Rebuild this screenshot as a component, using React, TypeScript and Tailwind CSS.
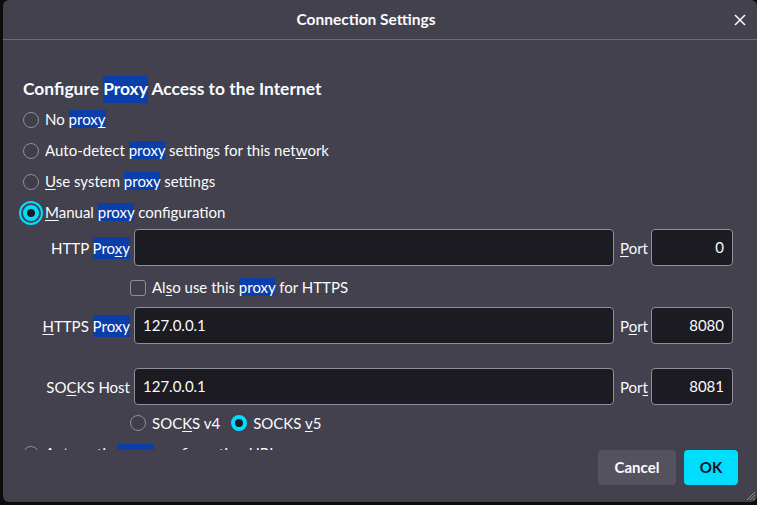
import React from "react";

const font = { fontFamily: "Lato, 'Noto Sans', sans-serif" };

function Hl({ children }: { children: React.ReactNode }) {
  return <span className="bg-[#0a3ea8] text-white">{children}</span>;
}

function Radio({ checked, focused }: { checked?: boolean; focused?: boolean }) {
  if (checked) {
    return (
      <span
        className={
          "inline-block h-4 w-4 shrink-0 rounded-full border-[4px] border-[#00ddff] bg-[#1c1b22] " +
          (focused ? "shadow-[0_0_0_2px_#42414d,0_0_0_4px_#00ddff]" : "")
        }
      />
    );
  }
  return <span className="inline-block h-4 w-4 shrink-0 rounded-full border-[1.5px] border-[#8f8f9d] bg-[#3f3e4a]" />;
}

function RadioRow({
  children,
  checked,
  focused,
}: {
  children: React.ReactNode;
  checked?: boolean;
  focused?: boolean;
}) {
  return (
    <div className="flex h-[31px] items-center gap-[6px] whitespace-nowrap">
      <Radio checked={checked} focused={focused} />
      <span>{children}</span>
    </div>
  );
}

function Field({
  label,
  value,
  port,
  portLabel,
}: {
  label: React.ReactNode;
  value: string;
  port: string;
  portLabel: React.ReactNode;
}) {
  return (
    <div className="flex h-[37px] items-center">
      <span className="flex w-[85px] justify-end whitespace-nowrap pt-[1px]">{label}</span>
      <div className="ml-[4px] flex h-full w-[480px] items-center rounded-[4px] border border-[#8f8f9d] bg-[#1c1b22] px-[8px]">
        {value}
      </div>
      <span className="w-[37px] pl-[6px] pt-[1px]">{portLabel}</span>
      <div className="flex h-full w-[82px] items-center justify-end rounded-[4px] border border-[#8f8f9d] bg-[#1c1b22] px-[8px]">
        {port}
      </div>
    </div>
  );
}

export default function App() {
  return (
    <div className="h-[505px] w-[757px] overflow-hidden bg-[#0c0c0d]" style={font}>
      <div className="relative ml-[3px] flex h-[502px] flex-col rounded-[6px] bg-[#42414d] text-[15px] text-[#fbfbfe]">
        <div className="relative flex h-[40px] shrink-0 items-center justify-center border-b border-[#6b6a75] pr-[28px]">
          <span className="text-[15.5px] font-bold">Connection Settings</span>
          <svg className="absolute right-[11px] top-[14px]" width="12" height="12" viewBox="0 0 12 12">
            <path d="M1 1L11 11M11 1L1 11" stroke="#fbfbfe" strokeWidth="1.5" />
          </svg>
        </div>

        <div className="h-[410px] shrink-0 overflow-hidden pl-[20px] pt-[33px]">
          <div className="flex h-[31px] items-center whitespace-nowrap pt-[2px] text-[17.4px] font-bold">
            Configure&nbsp;<Hl>Proxy</Hl>&nbsp;Access to the Internet
          </div>
          <RadioRow>
            No{" "}
            <Hl>
              prox<u className="underline-offset-2">y</u>
            </Hl>
          </RadioRow>
          <RadioRow>
            Auto-detect <Hl>proxy</Hl> settings for this net<u className="underline-offset-2">w</u>ork
          </RadioRow>
          <RadioRow>
            <u className="underline-offset-2">U</u>se system <Hl>proxy</Hl> settings
          </RadioRow>
          <RadioRow checked focused>
            <u className="underline-offset-2">M</u>anual <Hl>proxy</Hl> configuration
          </RadioRow>

          <div className="ml-[22px] pt-[1px]">
            <Field
              label={
                <>
                  HTTP&nbsp;
                  <Hl>
                    Pro<u className="underline-offset-2">x</u>y
                  </Hl>
                </>
              }
              value=""
              port="0"
              portLabel={
                <>
                  <u className="underline-offset-2">P</u>ort
                </>
              }
            />
            <div className="flex h-[41px] items-center gap-[6px] whitespace-nowrap pl-[85px] pt-[2px]">
              <span className="inline-block h-4 w-4 rounded-[3px] border-[1.5px] border-[#8f8f9d] bg-[#3f3e4a]" />
              <span>
                Al<u className="underline-offset-2">s</u>o use this <Hl>proxy</Hl> for HTTPS
              </span>
            </div>
            <Field
              label={
                <>
                  <u className="underline-offset-2">H</u>TTPS&nbsp;<Hl>Proxy</Hl>
                </>
              }
              value="127.0.0.1"
              port="8080"
              portLabel={
                <>
                  P<u className="underline-offset-2">o</u>rt
                </>
              }
            />
            <div className="h-[24px]" />
            <Field
              label={
                <>
                  SO<u className="underline-offset-2">C</u>KS&nbsp;Host
                </>
              }
              value="127.0.0.1"
              port="8081"
              portLabel={
                <>
                  Por<u className="underline-offset-2">t</u>
                </>
              }
            />
            <div className="flex h-[33px] items-center whitespace-nowrap pl-[85px] pt-[3px]">
              <Radio />
              <span className="ml-[6px]">
                SOC<u className="underline-offset-2">K</u>S v4
              </span>
              <span className="ml-[11px] flex">
                <Radio checked />
              </span>
              <span className="ml-[6px]">
                SOCKS <u className="underline-offset-2">v</u>5
              </span>
            </div>
          </div>

          <RadioRow>
            Automatic <Hl>proxy</Hl> configuration URL
          </RadioRow>
        </div>

        <div className="flex shrink-0 justify-end gap-[8px] pr-[19px]">
          <button className="h-[35px] w-[78px] rounded-[4px] bg-[#53525e] text-[15px] font-bold text-[#fbfbfe]">
            Cancel
          </button>
          <button className="h-[35px] w-[54px] rounded-[4px] bg-[#00ddff] text-[15px] font-bold text-[#15141a]">
            OK
          </button>
        </div>

        <svg className="absolute bottom-[1px] right-[1px]" width="12" height="12" viewBox="0 0 12 12">
          <path d="M11 3L3 11M11 6L6 11M11 9L9 11" stroke="#8f8f9d" strokeWidth="1" />
        </svg>
      </div>
    </div>
  );
}
